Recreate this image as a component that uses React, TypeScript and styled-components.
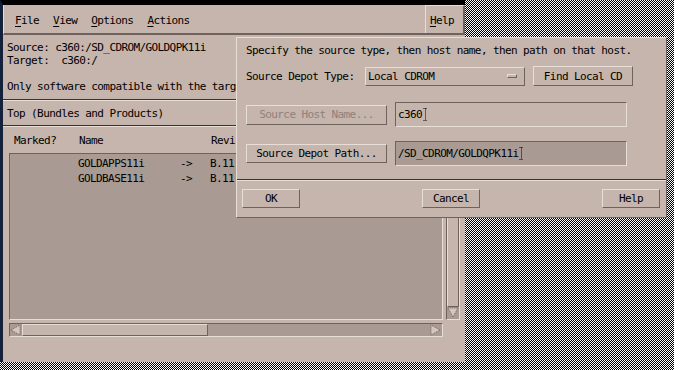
import React from 'react';
import styled, { createGlobalStyle, css } from 'styled-components';

const bg = '#c6b5ac';
const well = '#a99a93';
const light = '#e8ded8';
const dark = '#6f625c';
const rule = '#3a3230';

const GlobalStyle = createGlobalStyle`
  body {
    margin: 0;
    font-family: "DejaVu Sans Mono", "Liberation Mono", monospace;
    font-size: 11px;
    letter-spacing: -0.6px;
    color: #000;
  }
`;

const raised = css`
  border-top: 1px solid ${light};
  border-left: 1px solid ${light};
  border-right: 1px solid ${dark};
  border-bottom: 1px solid ${dark};
`;

const sunken = css`
  border-top: 1px solid ${dark};
  border-left: 1px solid ${dark};
  border-right: 1px solid ${light};
  border-bottom: 1px solid ${light};
`;

const Desktop = styled.div`
  position: relative;
  width: 674px;
  height: 370px;
  overflow: hidden;
  background-color: #fff;
  background-image: repeating-conic-gradient(#000 0% 25%, #fff 0% 50%);
  background-size: 2px 2px;
`;

const MainWindow = styled.div`
  position: absolute;
  left: 0;
  top: 0;
  width: 465px;
  height: 362px;
  box-sizing: border-box;
  border-top: 5px solid #000;
  border-left: 3px solid #13223a;
  background: ${bg};
  display: flex;
  flex-direction: column;
  overflow: hidden;
`;

const MenuBar = styled.div`
  height: 30px;
  box-sizing: border-box;
  display: flex;
  border-left: 1px solid ${light};
  border-bottom: 2px solid ${dark};
  padding-left: 4px;
`;

const MenuItem = styled.div<{ $framed?: boolean }>`
  display: flex;
  align-items: center;
  padding: 2px 7px 0;
  white-space: pre;
  ${({ $framed }) =>
    $framed &&
    css`
      margin-left: auto;
      padding: 2px 9px 0 4px;
      border-top: 1px solid ${light};
      border-left: 1px solid ${light};
      border-right: 2px solid ${dark};
    `}

  u {
    text-decoration: underline;
    text-underline-offset: 2px;
  }
`;

const InfoText = styled.div`
  margin-top: 6px;
  padding-left: 4px;
  line-height: 13px;
  white-space: pre;
`;

const Separator = styled.div<{ $gap: number }>`
  margin-top: ${({ $gap }) => $gap}px;
  border-top: 1px solid ${rule};
  border-bottom: 1px solid ${light};
`;

const SectionTitle = styled.div`
  margin-top: 6px;
  padding-left: 4px;
  line-height: 13px;
  white-space: pre;
`;

const Columns = styled.div`
  display: grid;
  grid-template-columns: 65px 102px 30px 1fr;
  line-height: 15px;
  white-space: pre;
`;

const HeaderRow = styled(Columns)`
  margin-top: 7px;
  padding-left: 11px;
  line-height: 13px;
`;

const ListArea = styled.div`
  margin-top: 6px;
  margin-left: 6px;
  display: flex;
  gap: 3px;
  height: 167px;
`;

const ListBox = styled.div`
  width: 434px;
  box-sizing: border-box;
  ${sunken};
  background: ${well};
  padding: 2px 0 0 3px;
`;

const VScroll = styled.div`
  width: 14px;
  box-sizing: border-box;
  ${sunken};
  background: ${well};
  display: flex;
  flex-direction: column;
`;

const HScroll = styled.div`
  margin-top: 3px;
  margin-left: 6px;
  width: 434px;
  height: 14px;
  box-sizing: border-box;
  ${sunken};
  background: ${well};
  display: flex;
`;

const Thumb = styled.div<{ $length?: number }>`
  ${raised};
  background: ${bg};
  box-sizing: border-box;
  ${({ $length }) => ($length ? `width: ${$length}px;` : 'flex: 1;')}
`;

const Spacer = styled.div`
  flex: 1;
`;

const Dialog = styled.div`
  position: absolute;
  left: 236px;
  top: 37px;
  width: 431px;
  height: 181px;
  box-sizing: border-box;
  ${raised};
  background: ${bg};
  display: flex;
  flex-direction: column;
`;

const Prompt = styled.div`
  margin-top: 6px;
  padding-left: 9px;
  line-height: 13px;
  white-space: pre;
`;

const FormRow = styled.div<{ $top: number; $height: number }>`
  margin-top: ${({ $top }) => $top}px;
  height: ${({ $height }) => $height}px;
  padding-left: 9px;
  display: flex;
  align-items: center;
  gap: 8px;
`;

const FieldLabel = styled.div`
  width: 111px;
  white-space: pre;
`;

const PushButton = styled.div<{ $width: number; $height?: number; $disabled?: boolean }>`
  width: ${({ $width }) => $width}px;
  height: ${({ $height }) => $height ?? 19}px;
  box-sizing: border-box;
  ${raised};
  display: flex;
  align-items: center;
  justify-content: center;
  white-space: pre;
  color: ${({ $disabled }) => ($disabled ? '#8e817b' : '#000')};
`;

const OptionMenu = styled.div`
  width: 160px;
  height: 19px;
  box-sizing: border-box;
  ${raised};
  display: flex;
  align-items: center;
  padding: 0 7px 0 2px;
  white-space: pre;
`;

const OptionGlyph = styled.span`
  margin-left: auto;
  width: 10px;
  height: 4px;
  box-sizing: border-box;
  ${raised};
  background: ${bg};
`;

const TextField = styled.div<{ $active?: boolean }>`
  width: 232px;
  height: 25px;
  box-sizing: border-box;
  ${sunken};
  background: ${({ $active }) => ($active ? well : bg)};
  display: flex;
  align-items: center;
  padding-left: 2px;
  white-space: pre;
`;

const DialogRule = styled.div`
  margin-top: 13px;
  border-top: 1px solid ${rule};
  border-bottom: 1px solid ${light};
`;

const ActionRow = styled.div`
  margin-top: 8px;
  padding: 0 6px 0 5px;
  display: flex;
  justify-content: space-between;
`;

const Caret = () => (
  <svg width="5" height="13" viewBox="0 0 5 13" style={{ marginLeft: 1 }}>
    <path d="M0.5 0.5h4M2.5 0.5v12M0.5 12.5h4" stroke="#000" strokeWidth="1" strokeDasharray="1 1" fill="none" />
  </svg>
);

const Arrow = ({ dir }: { dir: 'left' | 'right' | 'down' }) => {
  const pts = {
    left: '1,6 10,1 10,11',
    right: '10,6 1,1 1,11',
    down: '6,10 1,1 11,1',
  }[dir];
  return (
    <svg width="12" height="12" viewBox="0 0 12 12" style={{ display: 'block', flex: 'none' }}>
      <polygon points={pts} fill="#d4c7c0" stroke={dark} strokeWidth="1" strokeDasharray="1 1" />
    </svg>
  );
};

// only the part of each line left of the dialog is visible
const rows = [
  { name: 'GOLDAPPS11i', rev: 'B.11' },
  { name: 'GOLDBASE11i', rev: 'B.11' },
];

export default function App() {
  return (
    <>
      <GlobalStyle />
      <Desktop>
        <MainWindow>
          <MenuBar>
            <MenuItem><u>F</u>ile</MenuItem>
            <MenuItem><u>V</u>iew</MenuItem>
            <MenuItem><u>O</u>ptions</MenuItem>
            <MenuItem><u>A</u>ctions</MenuItem>
            <MenuItem $framed><u>H</u>elp</MenuItem>
          </MenuBar>
          <InfoText>
            {'Source: c360:/SD_CDROM/GOLDQPK11i\nTarget:  c360:/\n\nOnly software compatible with the targ'}
          </InfoText>
          <Separator $gap={6} />
          <SectionTitle>Top (Bundles and Products)</SectionTitle>
          <Separator $gap={5} />
          <HeaderRow>
            <span>Marked?</span>
            <span>Name</span>
            <span />
            <span>Revi</span>
          </HeaderRow>
          <ListArea>
            <ListBox>
              {rows.map((r) => (
                <Columns key={r.name}>
                  <span />
                  <span>{r.name}</span>
                  <span>-&gt;</span>
                  <span>{r.rev}</span>
                </Columns>
              ))}
            </ListBox>
            <VScroll>
              <Thumb />
              <Arrow dir="down" />
            </VScroll>
          </ListArea>
          <HScroll>
            <Arrow dir="left" />
            <Thumb $length={186} />
            <Spacer />
            <Arrow dir="right" />
          </HScroll>
        </MainWindow>

        <Dialog>
          <Prompt>Specify the source type, then host name, then path on that host.</Prompt>
          <FormRow $top={9} $height={20}>
            <FieldLabel>Source Depot Type:</FieldLabel>
            <OptionMenu>
              Local CDROM
              <OptionGlyph />
            </OptionMenu>
            <PushButton $width={100} $height={20}>Find Local CD</PushButton>
          </FormRow>
          <FormRow $top={16} $height={25}>
            <PushButton $width={141} $height={20} $disabled>Source Host Name...</PushButton>
            <TextField>c360<Caret /></TextField>
          </FormRow>
          <FormRow $top={14} $height={25}>
            <PushButton $width={141}>Source Depot Path...</PushButton>
            <TextField $active>/SD_CDROM/GOLDQPK11i<Caret /></TextField>
          </FormRow>
          <DialogRule />
          <ActionRow>
            <PushButton $width={58}>OK</PushButton>
            <PushButton $width={58}>Cancel</PushButton>
            <PushButton $width={58}>Help</PushButton>
          </ActionRow>
        </Dialog>
      </Desktop>
    </>
  );
}
